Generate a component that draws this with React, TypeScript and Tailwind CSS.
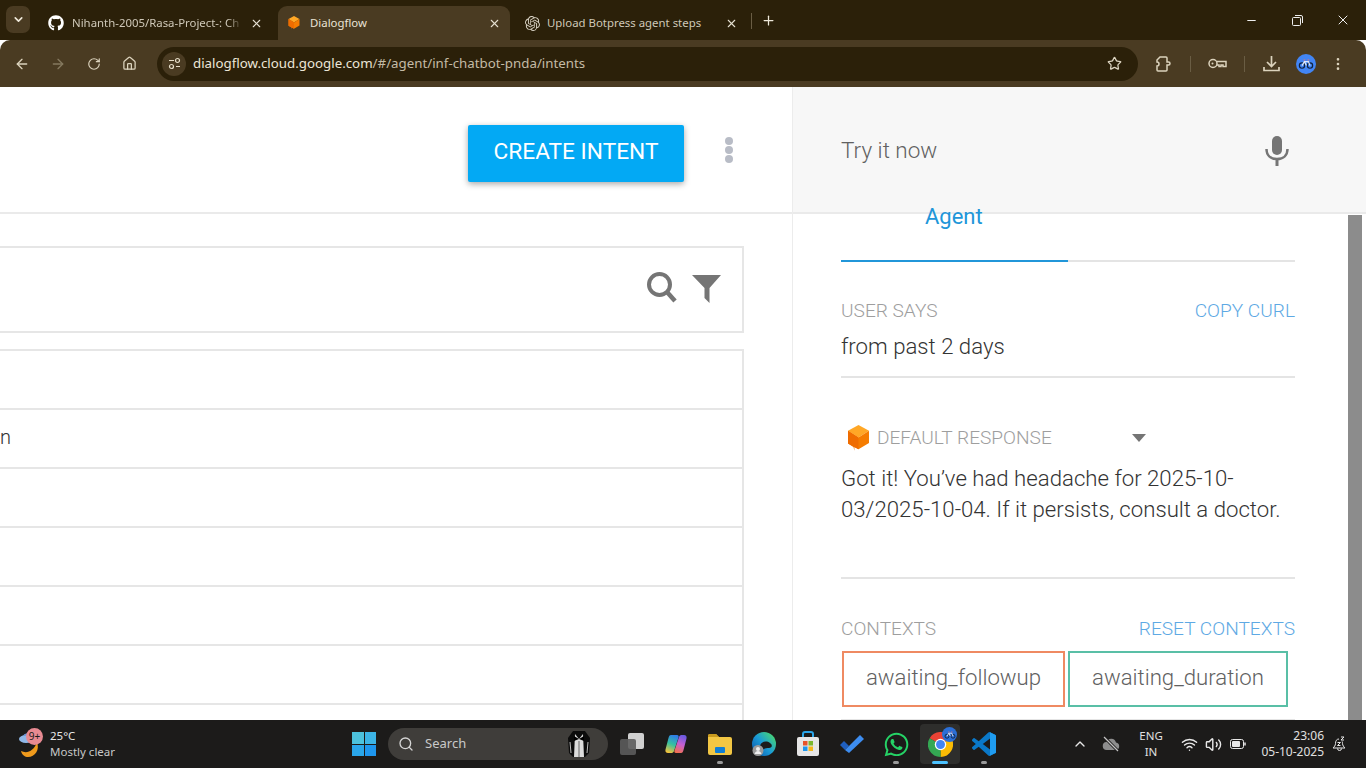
import React from "react";
import { ChevronDown, ChevronUp, X, Plus, ArrowLeft, ArrowRight, RotateCw, Home, Star, MoreVertical, Minus, Search, Wifi, Volume2 } from "lucide-react";
import { FaGithub, FaWhatsapp } from "react-icons/fa";
import { SiOpenai } from "react-icons/si";

const ui = "font-['Noto_Sans','Open_Sans',sans-serif]";

function DfLogo({ size = 16 }: { size?: number }) {
  return (
    <svg width={size} height={size * 1.12} viewBox="0 0 24 27">
      <path d="M12 0 23 6 12 13 1 6z" fill="#ffa726" />
      <path d="M1 6 12 13 23 6v13L12 25.500 7.500 23v4L7 23 1 19.500z" fill="#f57c00" />
      <path d="M1 6 12 13v12.500L7.500 23v4L7 23 1 19.500z" fill="#ef6c00" />
    </svg>
  );
}

function Bike({ size = 14 }: { size?: number }) {
  return (
    <svg width={size} height={size} viewBox="0 0 20 20" fill="none" strokeWidth="1.500">
      <circle cx="5" cy="12" r="3.300" stroke="#12233f" />
      <circle cx="15" cy="12" r="3.300" stroke="#12233f" />
      <path d="M5 12 8 7h5l2 5M8 7l2.500 5" stroke="#dfe8f7" />
      <path d="M7 5h2M12 5h2" stroke="#e57373" />
    </svg>
  );
}

function TabItem({ icon, title, active }: { icon: React.ReactNode; title: string; active?: boolean }) {
  return (
    <div className={`flex h-[34px] w-[232px] items-center rounded-t-[9px] pl-[10px] pr-[9px] ${active ? "bg-[#4a3b22]" : ""}`}>
      <div className="flex w-[22px] shrink-0 justify-start">{icon}</div>
      <span className={`min-w-0 flex-1 whitespace-nowrap text-[11.400px] ${active ? "text-[#e9e3d6]" : "text-[#cfc8b8]"}`}>{title}</span>
      <X size={13} className="ml-2 shrink-0 text-[#e6e0d2]" />
    </div>
  );
}

function BrowserChrome() {
  return (
    <div className={`shrink-0 ${ui}`}>
      <div className="flex h-[40px] items-end bg-[#2b2009]">
        <div className="mb-[7px] ml-[6px] flex h-[27px] w-[24px] items-center justify-center rounded-[7px] bg-[#4a3b22]">
          <ChevronDown size={13} strokeWidth={3} className="text-[#eee8da]" />
        </div>
        <div className="ml-[6px] w-[242px]">
          <div className="flex h-[34px] items-center pl-[12px] pr-[8px]">
            <FaGithub size={16} className="mr-[8px] shrink-0 text-white" />
            <span className="min-w-0 flex-1 whitespace-nowrap text-[11.400px] text-[#cfc8b8] [mask-image:linear-gradient(to_right,black_92%,transparent)]">Nihanth-2005/Rasa-Project-: Ch</span>
            <X size={13} className="ml-[8px] mr-[7px] shrink-0 text-[#e6e0d2]" />
          </div>
        </div>
        <TabItem active title="Dialogflow" icon={<DfLogo size={12} />} />
        <div className="ml-[5px]">
          <TabItem title="Upload Botpress agent steps" icon={<SiOpenai size={15} className="text-[#d8d2c4]" />} />
        </div>
        <div className="mb-[11px] ml-[4px] h-[16px] w-px bg-[#6a5d44]" />
        <Plus size={15} className="mb-[12px] ml-[9px] text-[#eee8da]" />
        <div className="mb-[12px] ml-auto flex items-center text-[#eee]">
          <Minus size={13} className="mr-[34px]" />
          <svg width="11" height="11" viewBox="0 0 11 11" fill="none" stroke="currentColor" className="mr-[32px]">
            <rect x="0.500" y="2.500" width="8" height="8" rx="1" />
            <path d="M3 .5h6a1.500 1.500 0 0 1 1.500 1.500v6" />
          </svg>
          <X size={16} strokeWidth={1.500} className="mr-[15px]" />
        </div>
      </div>
      <div className="flex h-[47px] items-center rounded-t-[10px] bg-[#4a3b22] text-[#dcd3bd]">
        <ArrowLeft size={16} className="ml-[14px]" />
        <ArrowRight size={16} className="ml-[20px] text-[#85795f]" />
        <RotateCw size={14} className="ml-[21px]" />
        <Home size={15} className="ml-[21px]" />
        <div className="ml-[20px] flex h-[34px] w-[981px] items-center rounded-full bg-[#2b2009] pl-[5px] pr-[16px]">
          <div className="flex h-[24px] w-[24px] items-center justify-center rounded-full bg-[#4a3b22]">
            <svg width="13" height="13" viewBox="0 0 13 13" fill="none" stroke="#e6dec9" strokeWidth="1.200">
              <path d="M1 3.500h5M8 9.500h4" />
              <circle cx="9.500" cy="3.500" r="2" />
              <circle cx="3.500" cy="9.500" r="2" />
            </svg>
          </div>
          <span className="ml-[7px] text-[13.300px] text-[#ece6d8]">
            dialogflow.cloud.google.com<span className="text-[#c4bba6]">/#/agent/inf-chatbot-pnda/intents</span>
          </span>
          <Star size={15} className="ml-auto text-[#ddd5c2]" />
        </div>
        <svg width="18" height="18" viewBox="0 0 18 18" fill="none" stroke="currentColor" strokeWidth="1.500" className="ml-[17px]">
          <path d="M5 2h6a1 1 0 0 1 1 1v4h1.500a1.500 1.500 0 0 1 0 3H12v5a1 1 0 0 1-1 1H3a1 1 0 0 1-1-1v-4a2 2 0 0 0 0-4V5z" />
        </svg>
        <div className="ml-[17px] h-[16px] w-px bg-[#6a5d44]" />
        <svg width="19" height="11" viewBox="0 0 19 11" fill="none" stroke="currentColor" strokeWidth="1.500" className="ml-[17px]">
          <circle cx="5" cy="5.500" r="4" />
          <circle cx="4.500" cy="5.500" r="1" fill="currentColor" stroke="none" />
          <path d="M9 3.500h9v5h-3V7h-2v1.500h-2V7H9" />
        </svg>
        <div className="ml-[17px] h-[16px] w-px bg-[#6a5d44]" />
        <svg width="17" height="17" viewBox="0 0 17 17" fill="none" stroke="currentColor" strokeWidth="1.700" className="ml-[18px]">
          <path d="M8.500 1v10M4 7l4.500 4.500L13 7M1 12v3.500h15V12" />
        </svg>
        <div className="ml-[16px] flex h-[20px] w-[20px] items-center justify-center rounded-full bg-[#4285f4]">
          <Bike size={16} />
        </div>
        <MoreVertical size={16} className="ml-[14px]" />
      </div>
    </div>
  );
}

function LeftColumn() {
  const rows = ["", "n", "", "", "", "", ""];
  return (
    <div className="flex w-[793px] shrink-0 flex-col overflow-hidden border-r border-[#ececec] font-['Roboto',sans-serif]">
      <div className="flex h-[127px] shrink-0 items-start border-b-2 border-[#eaeaea]">
        <button className="ml-[468px] mt-[38px] flex h-[57px] w-[216px] items-center justify-center rounded-[2px] bg-[#03a9f4] pb-[2px] text-[22.700px] text-white shadow-[0_2px_6px_rgba(0,0,0,0.35)]">
          CREATE INTENT
        </button>
        <div className="ml-[41px] mt-[50px] flex flex-col gap-[1px]">
          <div className="h-[8px] w-[8px] rounded-full bg-[#b8bcc6]" />
          <div className="h-[8px] w-[8px] rounded-full bg-[#b8bcc6]" />
          <div className="h-[8px] w-[8px] rounded-full bg-[#b8bcc6]" />
        </div>
      </div>
      <div className="mt-[32px] flex h-[87px] w-[744px] shrink-0 items-center justify-end border-2 border-l-0 border-[#e6e6e6] pr-[21px]">
        <svg width="30" height="31" viewBox="0 0 30 31" fill="none" stroke="#757575" className="mb-[5px] mr-[15px]">
          <circle cx="12.500" cy="12.500" r="10.500" strokeWidth="4" />
          <path d="M20 20l8 9" strokeWidth="4.500" />
        </svg>
        <svg width="29" height="28" viewBox="0 0 29 28" className="mb-[2px]">
          <path d="M0 0h29L17.500 13v15l-5-5V13z" fill="#757575" />
        </svg>
      </div>
      <div className="mt-[16px] w-[744px] border-t-2 border-r-2 border-[#e6e6e6]">
        {rows.map((text, i) => (
          <div key={i} className="flex h-[59px] items-center border-b-2 border-[#e6e6e6] pb-[3px] text-[20px] font-light text-[#333]">
            {text}
          </div>
        ))}
      </div>
    </div>
  );
}

function RightColumn() {
  return (
    <div className="flex min-w-0 flex-1 flex-col overflow-hidden font-['Roboto',sans-serif]">
      <div className="flex h-[127px] shrink-0 items-center border-b-2 border-[#eaeaea] bg-[#f7f7f7] pl-[48px] pr-[76px] pt-[2px]">
        <span className="text-[22.500px] font-light text-[#616161]">Try it now</span>
        <svg width="26" height="32" viewBox="0 0 26 32" className="ml-auto">
          <rect x="8" y="1" width="10" height="19" rx="5" fill="#757575" />
          <path d="M2.500 14c0 6 4 10 10.500 10s10.500-4 10.500-10" fill="none" stroke="#757575" strokeWidth="2.500" />
          <path d="M13 24v7" stroke="#757575" strokeWidth="3" />
        </svg>
      </div>
      <div className="flex min-h-0 flex-1">
        <div className="flex w-[555px] flex-col pl-[48px] pr-[53px] font-light">
          <div className="-mt-[6px] flex h-[54px] shrink-0 border-b-2 border-[#e4e4e4]">
            <div className="-mb-[2px] w-[227px] border-b-2 border-[#2196d9] pl-[84px] text-[22px] font-normal leading-[18px] text-[#2196d9]">Agent</div>
          </div>
          <div className="mt-[37px] flex h-[24px] items-center justify-between text-[19.100px]">
            <span className="text-[#9e9e9e]">USER SAYS</span>
            <span className="text-[#5ea9e4]">COPY CURL</span>
          </div>
          <div className="mt-[9px] text-[22.200px] leading-[28px] text-[#333]">from past 2 days</div>
          <div className="mt-[16px] h-[2px] shrink-0 bg-[#e4e4e4]" />
          <div className="mt-[48px] flex h-[24px] items-center text-[19.100px] text-[#9e9e9e]">
            <div className="ml-[6px] mr-[7px]"><DfLogo size={23} /></div>
            <span>DEFAULT RESPONSE</span>
            <div className="ml-[80px] h-0 w-0 border-x-[7px] border-t-[8px] border-x-transparent border-t-[#757575]" />
          </div>
          <div className="mt-[13px] text-[22.200px] leading-[31px] text-[#333]">
            Got it! You’ve had headache for 2025-10-03/2025-10-04. If it persists, consult a doctor.
          </div>
          <div className="mt-[52px] h-[2px] shrink-0 bg-[#e4e4e4]" />
          <div className="mt-[38px] flex h-[24px] items-center justify-between text-[19.100px]">
            <span className="text-[#9e9e9e]">CONTEXTS</span>
            <span className="text-[#5ea9e4]">RESET CONTEXTS</span>
          </div>
          <div className="mt-[10px] flex gap-[3px] pl-px text-[22.200px] text-[#616161]">
            <div className="flex h-[56px] w-[223px] items-center justify-center border-2 border-[#ef8a62] pb-[3px]">awaiting_followup</div>
            <div className="flex h-[56px] w-[220px] items-center justify-center border-2 border-[#59bfa6] pb-[3px]">awaiting_duration</div>
          </div>
          <div className="mt-[12px] h-[2px] shrink-0 bg-[#e4e4e4]" />
        </div>
        <div className="mt-[1px] w-[14px] shrink-0 bg-[#8c8c8c]" />
      </div>
    </div>
  );
}

function Win11Logo() {
  return (
    <div className="grid h-[24px] w-[24px] grid-cols-2 gap-[1px]">
      <div className="bg-[#4cc2dd]" />
      <div className="bg-[#3cb4e6]" />
      <div className="bg-[#2aa6ea]" />
      <div className="bg-[#1e96ee]" />
    </div>
  );
}

function Dock({ children, open, active }: { children: React.ReactNode; open?: boolean; active?: boolean }) {
  return (
    <div className={`relative flex h-[40px] w-[40px] items-center justify-center rounded-[4px] ${active ? "bg-[#2e2e2c]" : ""}`}>
      {children}
      {open && <div className={`absolute bottom-0 h-[3px] rounded-full ${active ? "w-[16px] bg-[#4cc2ff]" : "w-[6px] bg-[#9a9a9a]"}`} />}
    </div>
  );
}

function Taskbar() {
  return (
    <div className={`flex h-[48px] shrink-0 items-center bg-[#1c1b1a] text-white ${ui}`}>
      <div className="relative ml-[18px] h-[30px] w-[26px]">
        <svg width="24" height="28" viewBox="0 0 24 28" className="mt-[1px]">
          <path d="M3 21c6 3 13 0 16-9 3 8-2 15-9 15-3 0-6-2-7-6z" fill="#ef9a1c" />
          <ellipse cx="8" cy="9" rx="7" ry="4" fill="#8fb8e8" />
          <path d="M5 6a4 4 0 0 1 7-1z" fill="#6b94d6" />
        </svg>
        <div className="absolute left-[8px] top-[-1px] flex h-[17px] w-[17px] items-center justify-center rounded-full bg-[#e88a92] text-[10px] text-[#1c1b1a]">9+</div>
      </div>
      <div className="ml-[6px] flex flex-col text-[11.500px] leading-[16px]">
        <span className="text-[#e8e8e8]">25°C</span>
        <span className="text-[#c8c8c8]">Mostly clear</span>
      </div>
      <div className="ml-[237px]"><Win11Logo /></div>
      <div className="ml-[12px] flex h-[32px] w-[220px] items-center rounded-full bg-[#3f3d3a] pl-[10px] pr-[17px]">
        <Search size={16} className="text-[#d5d5d5]" />
        <span className="ml-[11px] text-[13px] text-[#c9c9c9]">Search</span>
        <svg width="24" height="28" viewBox="0 0 24 28" className="ml-auto">
          <path d="M6 1 1 8l1 15 4 4h12l4-4 1-15-5-7z" fill="#0c0c0c" />
          <path d="M8 4l4 5 4-5 1 23H7z" fill="#dcdcdc" />
          <path d="M7 6l5 3 5-3v5l-5-2-5 2z" fill="#000" />
          <path d="M11.500 11h1v16h-1z" fill="#666" />
          <path d="M3 12l1 11M21 12l-1 11" stroke="#bbb" strokeWidth="1" />
        </svg>
      </div>
      <div className="ml-[4px] flex gap-[4px]">
        <Dock>
          <svg width="26" height="24" viewBox="0 0 26 24">
            <rect x="9" y="1" width="16" height="16" rx="2" fill="#d0d0d0" />
            <rect x="1" y="7" width="16" height="16" rx="2" fill="#5c5c5c" fillOpacity="0.9" />
          </svg>
        </Dock>
        <Dock>
          <svg width="24" height="24" viewBox="0 0 24 24">
            <defs>
              <linearGradient id="cpl" x1="0.600" y1="0" x2="0.300" y2="1">
                <stop offset="0" stopColor="#2f7de8" />
                <stop offset="0.500" stopColor="#35c1a0" />
                <stop offset="1" stopColor="#f5c33b" />
              </linearGradient>
              <linearGradient id="cpr" x1="0.600" y1="0" x2="0.300" y2="1">
                <stop offset="0" stopColor="#6a5ae0" />
                <stop offset="0.500" stopColor="#c75fd0" />
                <stop offset="1" stopColor="#f2704e" />
              </linearGradient>
            </defs>
            <path d="M7 3h6c1.500 0 2 1 1.500 2.500L10 19c-.5 1.500-1.500 2-3 2H4c-2 0-3-1.500-2.500-3.500L4.500 6C5 4 5.500 3 7 3z" fill="url(#cpl)" />
            <path d="M17 21h-5c-1.500 0-2-1-1.500-2.500L15 5c.5-1.500 1.500-2 3-2h2c2 0 3 1.500 2.500 3.500L19.500 18c-.5 2-1 3-2.500 3z" fill="url(#cpr)" />
          </svg>
        </Dock>
        <Dock open>
          <svg width="24" height="22" viewBox="0 0 24 22">
            <path d="M0 3a2 2 0 0 1 2-2h6l3 3h11a2 2 0 0 1 2 2v14a2 2 0 0 1-2 2H2a2 2 0 0 1-2-2z" fill="#f2c744" />
            <path d="M0 3a2 2 0 0 1 2-2h6l3 3H0z" fill="#c89a1e" />
            <rect x="7" y="14" width="10" height="6" rx="1" fill="#0f7fd6" />
          </svg>
        </Dock>
        <Dock>
          <svg width="24" height="24" viewBox="0 0 24 24">
            <defs>
              <linearGradient id="ed" x1="1" y1="0.300" x2="0.200" y2="1">
                <stop offset="0" stopColor="#43d17c" />
                <stop offset="0.500" stopColor="#1a9ad6" />
                <stop offset="1" stopColor="#0f5fb0" />
              </linearGradient>
            </defs>
            <circle cx="12" cy="12" r="12" fill="url(#ed)" />
            <path d="M8 15c0-5 6-7 10-4 3 2 2 5-1 5-2 0-4 0-5 1-2 1-4 0-4-2z" fill="#1c1b1a" />
            <circle cx="6" cy="18.500" r="5.500" fill="#9a9a9a" />
            <circle cx="6" cy="17" r="2" fill="#eee" />
            <path d="M2.500 22c.5-2 2-3 3.500-3s3 1 3.500 3z" fill="#eee" />
          </svg>
        </Dock>
        <Dock>
          <svg width="24" height="26" viewBox="0 0 24 26">
            <path d="M7 7V3a2 2 0 0 1 2-2h6a2 2 0 0 1 2 2v4" fill="none" stroke="#2aa6ea" strokeWidth="2" />
            <rect x="1" y="6" width="22" height="19" rx="2" fill="#e6e6e6" />
            <rect x="7" y="10" width="4.500" height="4.500" fill="#e8542a" />
            <rect x="12.500" y="10" width="4.500" height="4.500" fill="#7cb82f" />
            <rect x="7" y="15.500" width="4.500" height="4.500" fill="#1e96ee" />
            <rect x="12.500" y="15.500" width="4.500" height="4.500" fill="#f5b81c" />
          </svg>
        </Dock>
        <Dock>
          <svg width="26" height="20" viewBox="0 0 26 20">
            <path d="M1 11l4-4 5 5-4 4z" fill="#1f5fbf" />
            <path d="M6 16l4-4L21 1l4 4-15 14z" fill="#3d8df0" />
          </svg>
        </Dock>
        <Dock open>
          <FaWhatsapp size={27} className="text-[#25d366]" />
        </Dock>
        <Dock open active>
          <svg width="25" height="25" viewBox="0 0 24 24">
            <path d="M12 12 1.600 6A12 12 0 0 1 22.400 6z" fill="#ea4335" />
            <path d="M12 12 22.400 6A12 12 0 0 1 12 24z" fill="#fbbc05" />
            <path d="M12 12 12 24A12 12 0 0 1 1.600 6z" fill="#34a853" />
            <circle cx="12" cy="12" r="5.500" fill="#fff" />
            <circle cx="12" cy="12" r="4.300" fill="#4285f4" />
          </svg>
          <div className="absolute right-[3px] top-[3px] flex h-[15px] w-[15px] items-center justify-center rounded-full bg-[#2b6fd6]">
            <Bike size={12} />
          </div>
        </Dock>
        <Dock open>
          <svg width="24" height="24" viewBox="0 0 100 100">
            <path fillRule="evenodd" d="M96 11 75 1a6 6 0 0 0-7 1L28 39 11 26a4 4 0 0 0-5 0L1 31a4 4 0 0 0 0 6l15 13L1 63a4 4 0 0 0 0 6l5 5a4 4 0 0 0 5 0l17-13 40 37a6 6 0 0 0 7 1l21-10a6 6 0 0 0 4-6V17a6 6 0 0 0-4-6zM75 73 45 50l30-23z" fill="#0a78c8" />
            <path d="M75 1 96 11a6 6 0 0 1 4 6v66a6 6 0 0 1-4 6L75 99z" fill="#1f9cf0" />
          </svg>
        </Dock>
      </div>
      <ChevronUp size={16} strokeWidth={2} className="ml-[68px] text-[#e8e8e8]" />
      <svg width="18" height="16" viewBox="0 0 18 16" className="ml-[14px]">
        <path d="M5 14a4 4 0 0 1-.5-8A5 5 0 0 1 14 6.500 3.800 3.800 0 0 1 14 14z" fill="#8d8d8d" />
        <path d="M2 1l14 14" stroke="#1c1b1a" strokeWidth="3" />
        <path d="M2 1l14 14" stroke="#c4c4c4" strokeWidth="1.200" />
      </svg>
      <div className="ml-[16px] flex w-[30px] flex-col items-center text-[11.500px] leading-[16px] text-[#e0e0e0]">
        <span>ENG</span>
        <span>IN</span>
      </div>
      <Wifi size={17} className="ml-[15px] text-[#e8e8e8]" />
      <Volume2 size={17} className="ml-[7px] text-[#e8e8e8]" />
      <svg width="16" height="10" viewBox="0 0 16 10" fill="none" className="ml-[8px]">
        <rect x="0.500" y="0.500" width="13" height="9" rx="2" stroke="#e8e8e8" />
        <rect x="2" y="2" width="8" height="6" rx="1" fill="#e8e8e8" />
        <path d="M15 3.500v3" stroke="#e8e8e8" strokeWidth="1.500" />
      </svg>
      <div className="ml-[14px] flex w-[64px] flex-col items-end text-[12px] leading-[16px] text-[#e0e0e0]">
        <span>23:06</span>
        <span>05-10-2025</span>
      </div>
      <svg width="15" height="16" viewBox="0 0 15 16" fill="none" stroke="#e8e8e8" className="ml-[8px]">
        <path d="M7 3C4.500 3 3.500 5 3.500 7.500c0 2-1.500 3.500-2.500 4.500h12c-1-1-2.500-2.500-2.500-4.500 0-1-.1-1.500-.3-2" />
        <path d="M5.500 12.500a2 2 0 0 0 4 0" />
        <path d="M9 1h3l-3 3h3M5.500 6.500h3l-3 3h3" strokeWidth="1" />
      </svg>
    </div>
  );
}

export default function App() {
  return (
    <div className="flex h-screen w-screen flex-col overflow-hidden bg-white">
      <BrowserChrome />
      <div className="flex min-h-0 flex-1 overflow-hidden">
        <LeftColumn />
        <RightColumn />
      </div>
      <Taskbar />
    </div>
  );
}
